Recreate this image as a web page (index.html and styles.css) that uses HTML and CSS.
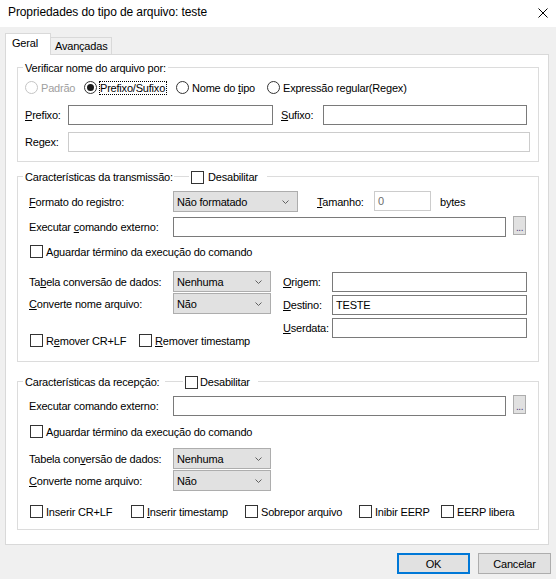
FILE: index.html
```html
<!DOCTYPE html>
<html lang="pt">
<head>
<meta charset="utf-8">
<title>Propriedades do tipo de arquivo: teste</title>
<link rel="stylesheet" href="styles.css">
</head>
<body>
<div class="titlebar">
  <span class="title">Propriedades do tipo de arquivo: teste</span>
  <svg class="close" width="10" height="10" viewBox="0 0 10 10"><path d="M0.5 0.5 L9.5 9.5 M9.5 0.5 L0.5 9.5" stroke="#000" stroke-width="1" fill="none"/></svg>
</div>
<div class="main">
  <div class="tabs">
    <div class="tab tab-active">Geral</div>
    <div class="tab tab-other">Avançadas</div>
  </div>
  <div class="panel">
    <!-- Group 1 -->
    <div class="group g1">
      <div class="legend"><span class="legend-text">Verificar nome do arquivo por:</span></div>
      <div class="radios">
        <div class="radio ri-1 disabled">
          <svg width="13" height="13" viewBox="0 0 13 13"><circle cx="6.5" cy="6.5" r="6" fill="#fff" stroke="#c4c4c4"/></svg>
          <span>Padrão</span>
        </div>
        <div class="radio ri-2">
          <svg width="13" height="13" viewBox="0 0 13 13"><circle cx="6.5" cy="6.5" r="6" fill="#fff" stroke="#333"/><circle cx="6.5" cy="6.5" r="3.5" fill="#1a1a1a"/></svg>
          <span class="focus">Prefixo/Sufixo</span>
        </div>
        <div class="radio ri-3">
          <svg width="13" height="13" viewBox="0 0 13 13"><circle cx="6.5" cy="6.5" r="6" fill="#fff" stroke="#333"/></svg>
          <span>Nome do <u>t</u>ipo</span>
        </div>
        <div class="radio">
          <svg width="13" height="13" viewBox="0 0 13 13"><circle cx="6.5" cy="6.5" r="6" fill="#fff" stroke="#333"/></svg>
          <span>Expressão regular(Regex)</span>
        </div>
      </div>
      <div class="row r-prefix">
        <span class="lbl lbl-pre"><u>P</u>refixo:</span>
        <div class="edit in-pre"></div>
        <span class="lbl lbl-suf"><u>S</u>ufixo:</span>
        <div class="edit in-suf"></div>
      </div>
      <div class="row r-regex">
        <span class="lbl lbl-pre">Regex:</span>
        <div class="edit edit-disabled in-regex"></div>
      </div>
    </div>

    <!-- Group 2 -->
    <div class="group g2">
      <div class="legend">
        <span class="legend-text lt-trans">Características da transmissão:</span>
        <span class="legend-check lc-trans"><span class="cb"></span><span>Desabilitar</span></span>
      </div>
      <div class="row r-fmt">
        <span class="lbl lbl-wide"><u>F</u>ormato do registro:</span>
        <div class="combo combo-fmt"><span>Não formatado</span><svg width="7" height="4" viewBox="0 0 7 4"><polyline points="0.5,0.5 3.5,3.5 6.5,0.5" fill="none" stroke="#606060"/></svg></div>
        <span class="lbl lbl-tam"><u>T</u>amanho:</span>
        <div class="edit edit-disabled in-tam"><span class="grey">0</span></div>
        <span class="bytes">bytes</span>
      </div>
      <div class="row r-exec">
        <span class="lbl lbl-wide">Executar <u>c</u>omando externo:</span>
        <div class="edit in-exec"></div>
        <div class="dots">...</div>
      </div>
      <div class="row r-wait">
        <span class="check"><span class="cb"></span><span>Aguardar término da execução do comando</span></span>
      </div>
      <div class="block">
        <div class="col-left">
          <div class="row r-combo">
            <span class="lbl lbl-wide">Ta<u>b</u>ela conversão de dados:</span>
            <div class="combo combo-sm"><span>Nenhuma</span><svg width="7" height="4" viewBox="0 0 7 4"><polyline points="0.5,0.5 3.5,3.5 6.5,0.5" fill="none" stroke="#606060"/></svg></div>
          </div>
          <div class="row r-combo r-combo2">
            <span class="lbl lbl-wide"><u>C</u>onverte nome arquivo:</span>
            <div class="combo combo-sm"><span>Não</span><svg width="7" height="4" viewBox="0 0 7 4"><polyline points="0.5,0.5 3.5,3.5 6.5,0.5" fill="none" stroke="#606060"/></svg></div>
          </div>
          <div class="row r-remove">
            <span class="check ck-rem1"><span class="cb"></span><span>R<u>e</u>mover CR+LF</span></span>
            <span class="check"><span class="cb"></span><span><u>R</u>emover timestamp</span></span>
          </div>
        </div>
        <div class="col-right">
          <div class="row r-side">
            <span class="lbl lbl-side"><u>O</u>rigem:</span>
            <div class="edit in-side"></div>
          </div>
          <div class="row r-side">
            <span class="lbl lbl-side"><u>D</u>estino:</span>
            <div class="edit in-side"><span>TESTE</span></div>
          </div>
          <div class="row r-side">
            <span class="lbl lbl-side"><u>U</u>serdata:</span>
            <div class="edit in-side"></div>
          </div>
        </div>
      </div>
    </div>

    <!-- Group 3 -->
    <div class="group g3">
      <div class="legend">
        <span class="legend-text lt-recv">Características da recepção:</span>
        <span class="legend-check lc-recv"><span class="cb"></span><span>Desabilitar</span></span>
      </div>
      <div class="row r-exec r-exec3">
        <span class="lbl lbl-wide">Executar comando externo:</span>
        <div class="edit in-exec"></div>
        <div class="dots">...</div>
      </div>
      <div class="row r-wait r-wait3">
        <span class="check"><span class="cb"></span><span>Aguardar término da execução do comando</span></span>
      </div>
      <div class="row r-combo r-tab3">
        <span class="lbl lbl-wide">Tabela con<u>v</u>ersão de dados:</span>
        <div class="combo combo-sm"><span>Nenhuma</span><svg width="7" height="4" viewBox="0 0 7 4"><polyline points="0.5,0.5 3.5,3.5 6.5,0.5" fill="none" stroke="#606060"/></svg></div>
      </div>
      <div class="row r-combo r-combo2">
        <span class="lbl lbl-wide"><u>C</u>onverte nome arquivo:</span>
        <div class="combo combo-sm"><span>Não</span><svg width="7" height="4" viewBox="0 0 7 4"><polyline points="0.5,0.5 3.5,3.5 6.5,0.5" fill="none" stroke="#606060"/></svg></div>
      </div>
      <div class="row r-bottom3">
        <span class="check ck-b1"><span class="cb"></span><span>Inserir CR+LF</span></span>
        <span class="check ck-b2"><span class="cb"></span><span><u>I</u>nserir timestamp</span></span>
        <span class="check ck-b3"><span class="cb"></span><span>Sobrepor arquivo</span></span>
        <span class="check ck-b4"><span class="cb"></span><span>Inibir EERP</span></span>
        <span class="check"><span class="cb"></span><span>EERP libera</span></span>
      </div>
    </div>
  </div>
  <div class="buttons">
    <div class="btn btn-default">OK</div>
    <div class="btn">Cancelar</div>
  </div>
</div>
</body>
</html>
```

FILE: styles.css
```css
* { box-sizing: border-box; }
html, body { margin: 0; padding: 0; }
body {
  width: 556px;
  height: 579px;
  overflow: hidden;
  background: #f0f0f0;
  font-family: "Liberation Sans", Arial, sans-serif;
  font-size: 11px;
  letter-spacing: -0.2px;
  line-height: 14px;
  color: #000;
}
u { text-decoration: underline; text-underline-offset: 1px; }

.titlebar {
  height: 27px;
  background: #fff;
  display: flex;
  align-items: center;
  justify-content: space-between;
  padding: 0 8px 3px 8px;
  font-size: 12px;
  letter-spacing: -0.1px;
}
.close { display: block; margin-top: 2px; }

.main { padding: 6px 5px 0 5px; }

.tabs { display: flex; align-items: flex-end; height: 21px; }
.tab { border: 1px solid #d9d9d9; border-bottom: none; }
.tab-active {
  width: 46px;
  height: 22px;
  background: #fff;
  margin-bottom: -1px;
  position: relative;
  z-index: 1;
  padding: 2px 0 0 6px;
}
.tab-other {
  width: 61px;
  height: 17px;
  border-left: none;
  padding: 1px 0 0 4px;
  background: #f0f0f0;
}

.panel {
  width: 544px;
  height: 491px;
  background: #fff;
  border: 1px solid #d9d9d9;
  padding: 12px 0 0 11px;
}

.group { width: 522px; border: 1px solid #dcdcdc; }
.g1 { height: 95px; }
.g2 { height: 186px; margin-top: 14px; padding-left: 11px; }
.g3 { height: 149px; margin-top: 19px; padding-left: 11px; }

.legend {
  display: flex;
  align-items: center;
  height: 14px;
  margin-top: -7px;
  margin-left: 5px;
}
.g2 .legend, .g3 .legend { margin-left: -6px; }
.legend-text { background: #fff; padding: 0 2px; white-space: nowrap; }
.lt-trans { width: 151px; }
.lt-recv { width: 142px; }
.legend-check { display: flex; align-items: center; background: #fff; }
.lc-trans { margin-left: 15px; padding: 0 9px 0 2px; gap: 4px; }
.lc-recv { margin-left: 18px; padding: 0 8px 0 2px; gap: 2px; }

.radios { display: flex; height: 13px; margin-top: 6px; padding-left: 7px; align-items: center; }
.radio { display: flex; align-items: center; gap: 2px; white-space: nowrap; }
.radio svg { display: block; flex: none; }
.radio span { padding-left: 1px; }
.ri-1 { width: 59px; }
.ri-2 { width: 92px; }
.ri-3 { width: 91px; }
.disabled { color: #a0a0a0; }
.radio .focus { border: 1px dotted #000; padding: 0 1px 0 0; line-height: 12px; margin-left: 0; }

.row { display: flex; align-items: center; white-space: nowrap; }
.lbl { flex: none; }

.edit {
  flex: none;
  height: 20px;
  background: #fff;
  border: 1px solid #7a7a7a;
  display: flex;
  align-items: center;
  padding-left: 3px;
}
.edit-disabled { border-color: #cccccc; }
.grey { color: #6d6d6d; }

.r-prefix { margin-top: 11px; height: 20px; padding-left: 7px; }
.r-regex { margin-top: 7px; height: 20px; padding-left: 7px; }
.lbl-pre { width: 43px; }
.in-pre { width: 205px; }
.lbl-suf { margin-left: 8px; width: 42px; }
.in-suf { width: 204px; }
.in-regex { width: 462px; }

.lbl-wide { width: 144px; }

.combo {
  flex: none;
  height: 21px;
  background: #e1e1e1;
  border: 1px solid #adadad;
  display: flex;
  align-items: center;
  justify-content: space-between;
  padding: 0 8px 0 3px;
}
.combo svg { display: block; }
.combo-fmt { width: 125px; }
.combo-sm { width: 98px; }

.r-fmt { margin-top: 7px; height: 21px; align-items: flex-start; }
.r-fmt .lbl, .r-fmt .bytes { align-self: center; }
.lbl-tam { margin-left: 19px; width: 57px; }
.in-tam { width: 57px; }
.bytes { margin-left: 9px; }

.r-exec { margin-top: 5px; height: 20px; }
.in-exec { width: 333px; }
.dots {
  flex: none;
  width: 13px;
  height: 19px;
  margin-left: 7px;
  align-self: flex-start;
  margin-top: -1px;
  background: #e1e1e1;
  border: 1px solid #adadad;
  display: flex;
  align-items: flex-end;
  justify-content: center;
  font-size: 10px;
  line-height: 12px;
  letter-spacing: -0.5px;
  color: #4b3a7a;
}

.check { display: flex; align-items: center; gap: 3px; flex: none; }
.cb { display: block; width: 13px; height: 13px; border: 1px solid #333; background: #fff; flex: none; }

.r-wait { margin-top: 8px; height: 13px; padding-left: 1px; }

.block { display: flex; margin-top: 13px; }
.r-combo { height: 21px; }
.r-combo2 { margin-top: 1px; }
.r-remove { margin-top: 20px; height: 13px; padding-left: 1px; }
.ck-rem1 { width: 109px; }

.col-right { margin-left: 12px; margin-top: 1px; display: flex; flex-direction: column; gap: 3px; }
.r-side { height: 20px; }
.lbl-side { width: 49px; }
.in-side { width: 195px; }

.r-exec3 { margin-top: 7px; }
.r-wait3 { margin-top: 9px; }
.r-tab3 { margin-top: 10px; }
.r-bottom3 { margin-top: 14px; height: 13px; padding-left: 1px; }
.ck-b1 { width: 101px; }
.ck-b2 { width: 114px; }
.ck-b3 { width: 114px; }
.ck-b4 { width: 82px; }

.buttons { display: flex; justify-content: flex-end; gap: 8px; margin-top: 8px; }
.btn {
  width: 73px;
  height: 21px;
  background: #e1e1e1;
  border: 1px solid #adadad;
  display: flex;
  align-items: center;
  justify-content: center;
}
.btn-default { border: 2px solid #0078d7; }
```
